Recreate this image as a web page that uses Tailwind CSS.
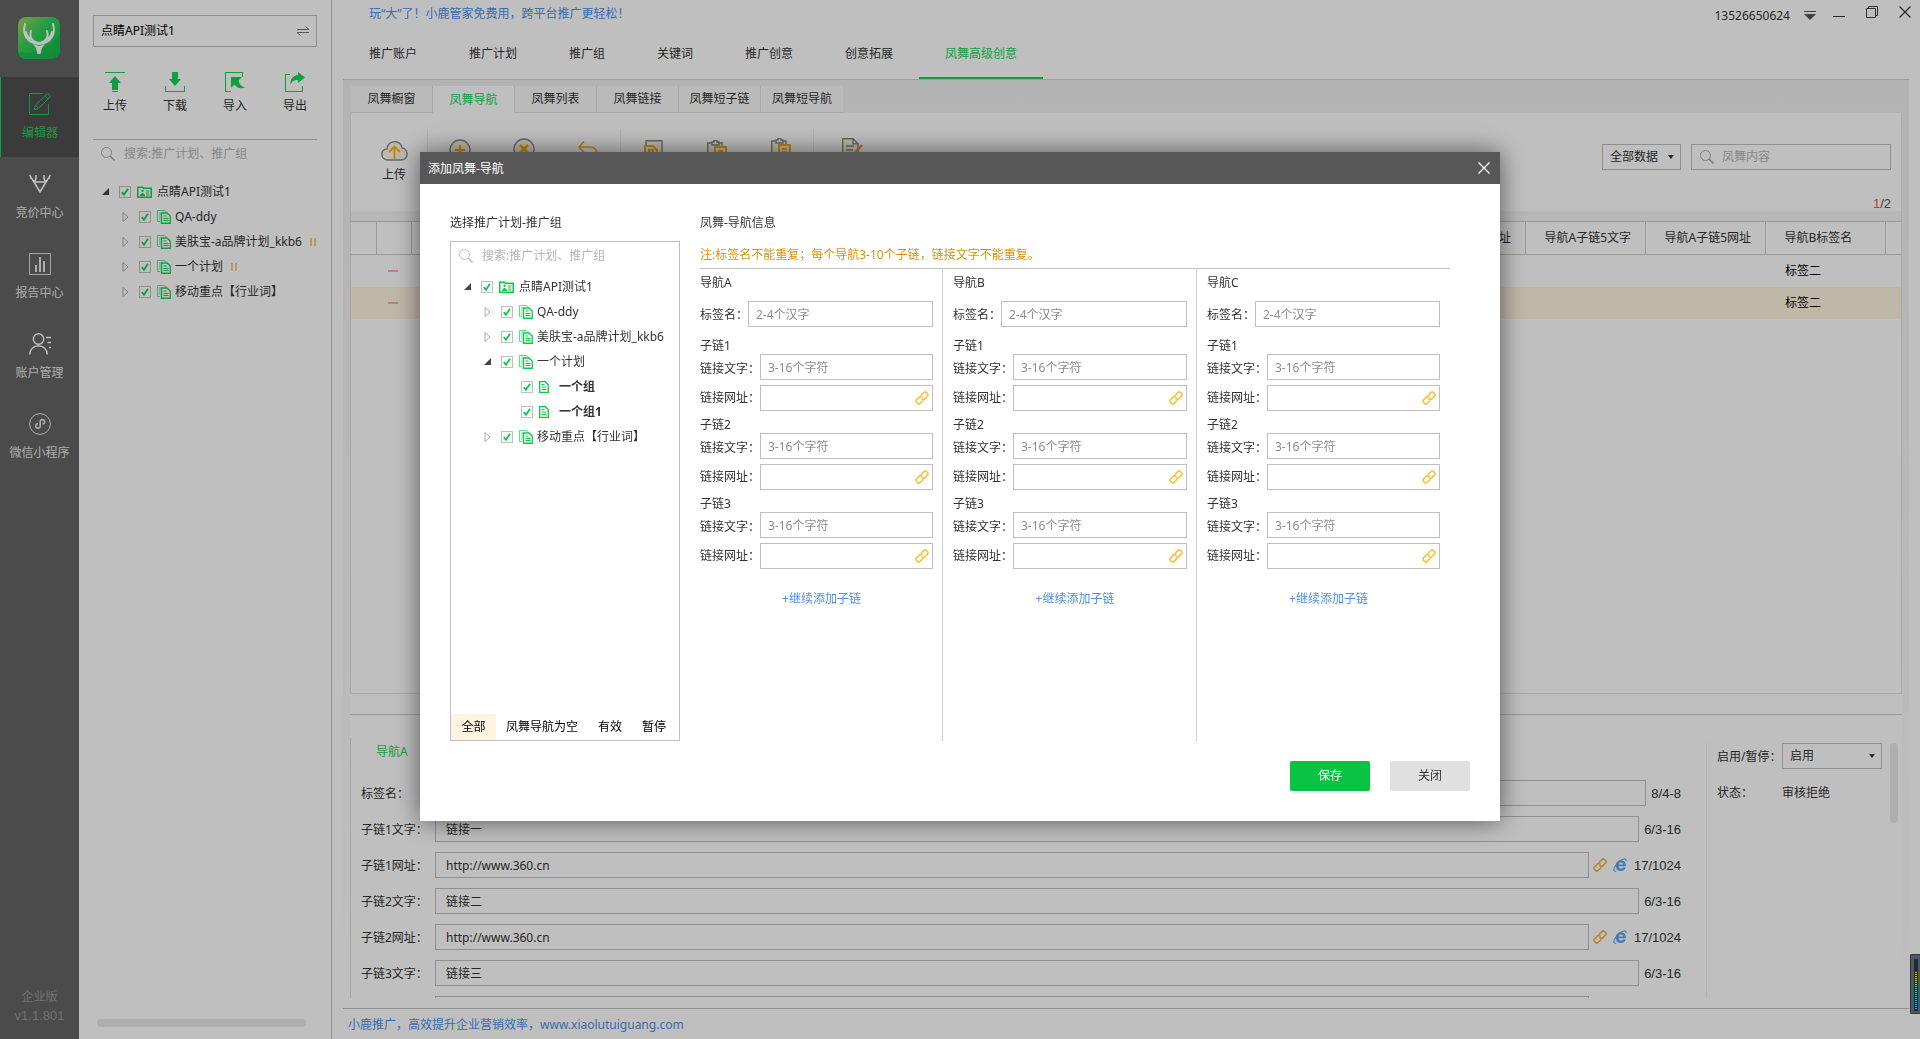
<!DOCTYPE html>
<html lang="zh-CN">
<head>
<meta charset="utf-8">
<title>小鹿推广</title>
<script src="https://cdn.jsdelivr.net/npm/@tailwindcss/browser@4"></script>
</head>
<body class="font-['Noto_Sans','Noto_Sans_CJK_SC',sans-serif] text-xs leading-4 text-[#333] bg-white">

<svg class="hidden" aria-hidden="true">
  <symbol id="search" viewBox="0 0 14 14"><circle cx="5.5" cy="5.5" r="5" fill="none" stroke="currentColor"/><path d="M9 9l4.500 4.500" fill="none" stroke="currentColor" stroke-width="1.600"/></symbol>
  <symbol id="account" viewBox="0 0 15 12"><path d="M.75 1.250h5l1 1h7.500v9H.75z" fill="none" stroke="currentColor" stroke-width="1.500"/><path d="M5.500 3.500v2.500M4.250 4.750h2.500M3 9.500h5M3.500 8.500h4M4.500 7.500h2M9 5h3.500M9 7h3M9 9h3.500" stroke="currentColor" fill="none" stroke-width="1.200"/></symbol>
  <symbol id="plan" viewBox="0 0 14 14"><path d="M3 11.500H.5V.5h7l2 1.500M2 3h2M2 5h1.500M2 7h1.500M2 9h1.500" fill="none" stroke="currentColor" opacity=".65"/><path d="M4.500 3h5.500l3.250 3v7.250H4.500z" fill="none" stroke="currentColor" stroke-width="1.300"/><path d="M6.500 6h3M6.500 8.500h5M6.500 10.500h5" stroke="currentColor" fill="none"/></symbol>
  <symbol id="group" viewBox="0 0 10 12"><path d="M.7.700h5.600l3 3v7.600H.7z" fill="none" stroke="currentColor" stroke-width="1.300"/><path d="M2.500 3.500h3M2.500 6h5M2.500 8.500h5" stroke="currentColor" fill="none"/></symbol>
  <symbol id="tick" viewBox="0 0 12 12"><path d="M2.800 6.200l2.200 2.600 4-6" fill="none" stroke="currentColor" stroke-width="1.800"/></symbol>
  <symbol id="link" viewBox="0 0 14 14"><g fill="none" stroke="currentColor" stroke-width="1.600" transform="rotate(-45 7 7)"><path d="M6 9.500H1.500a1.500 1.500 0 0 1-1.500-1.500V6a1.500 1.500 0 0 1 1.500-1.500h4.500a1.500 1.500 0 0 1 1.500 1.500v1"/><path d="M8 4.500h4.500a1.500 1.500 0 0 1 1.500 1.500v2a1.500 1.500 0 0 1-1.500 1.500H8a1.500 1.500 0 0 1-1.500-1.500V7"/></g></symbol>
  <symbol id="ie" viewBox="0 0 14 14"><path d="M12.900 8.300H5.700c.1 1.500 1 2.300 2.200 2.300.9 0 1.600-.4 1.900-1.100h2.900C12 11.800 10.300 13 7.900 13 4.800 13 2.900 11 2.900 7.700S5 2.300 7.900 2.300c3.200 0 5.100 2.100 5 6zM5.800 6.500h4.300c-.1-1.300-.9-2-2.100-2s-2 .7-2.200 2z" fill="currentColor" fill-rule="evenodd"/><path d="M3.500 13C1 14 .2 12.500 1.200 10 2.700 6 7 1.800 10.500 1c2-.5 2.900.3 2.300 2" fill="none" stroke="currentColor" stroke-width="1.100"/></symbol>
  <symbol id="open" viewBox="0 0 7 7"><path d="M7 0v7H0z" fill="#444"/></symbol>
  <symbol id="closed" viewBox="0 0 7 12"><path d="M1 1.500v9L6 6z" fill="none" stroke="#aaa"/></symbol>
  <symbol id="pause" viewBox="0 0 6 8"><path d="M1 0v8M5 0v8" stroke="#f3bd63" stroke-width="1.500"/></symbol>
  <symbol id="close" viewBox="0 0 12 12"><path d="M.5.500l11 11M11.500.500l-11 11" fill="none" stroke="currentColor" stroke-width="1.200"/></symbol>
</svg>

<div class="flex h-screen overflow-hidden">

  <!-- primary navigation -->
  <nav class="flex w-[79px] shrink-0 flex-col bg-[#646464] text-[#e4e4e4]">
    <div class="flex h-[77px] items-start pt-[17px] pl-[18px]">
      <svg class="size-[42px]" viewBox="0 0 42 42">
        <defs><linearGradient id="lg" x1="0" y1="0" x2="1" y2="1"><stop offset="0" stop-color="#a3d658"/><stop offset=".45" stop-color="#2fd05a"/><stop offset="1" stop-color="#12bd4c"/></linearGradient></defs>
        <rect width="42" height="42" rx="8" fill="url(#lg)"/>
        <path d="M0 35c12 3 30-2 42-18v17a8 8 0 0 1-8 8H8a8 8 0 0 1-8-7z" fill="#10b848" opacity=".5"/>
        <path d="M7 7c-3 10 2 19 14 20 12-1 17-10 14-20M13 14c-2 6 1 11 8 12 7-1 10-6 8-12M8 15c0 3 2 5 4 7M34 15c0 3-2 5-4 7" fill="none" stroke="#fff" stroke-width="2" stroke-linecap="round"/>
        <path d="M15 27l6 2 6-2-3 4-1.500 6h-3L18 31z" fill="#fff"/>
      </svg>
    </div>
    <a href="#" class="flex h-20 flex-col items-center border-l border-[#12d654] bg-[#4f4f4f] pt-4 text-[#1fca5a]">
      <svg class="size-[22px]" viewBox="0 0 22 22" fill="none" stroke="currentColor"><path d="M13.500.5H.5v21h19V11"/><path d="M5 17l1.500-5L17.500 1.200q1.200-.9 2.500.3t.8 2.500L9.500 15.500zM6.500 12l3 3.500M16 3l3 3"/></svg>
      <span class="mt-[10px]">编辑器</span>
    </a>
    <a href="#" class="flex h-20 flex-col items-center pt-4">
      <svg class="size-[22px]" viewBox="0 0 22 22" fill="none" stroke="#fff" stroke-width="1.500"><path d="M.5 2l4.500 7 6 10 6-10 4.500-7M5 9h12M7 2v4L5 9M15 2v4l2 3M3.500 6L1 4.500M18.500 6L21 4.500"/></svg>
      <span class="mt-[10px]">竞价中心</span>
    </a>
    <a href="#" class="flex h-20 flex-col items-center pt-4">
      <svg class="size-[22px]" viewBox="0 0 22 22" fill="none" stroke="#fff"><rect x=".5" y=".5" width="21" height="21" opacity=".75"/><path d="M7 12v7M11 4v15M15 8v11" stroke-width="1.700"/></svg>
      <span class="mt-[10px]">报告中心</span>
    </a>
    <a href="#" class="flex h-20 flex-col items-center pt-4">
      <svg class="size-[22px]" viewBox="0 0 22 22" fill="none" stroke="#fff" stroke-width="1.400"><circle cx="9.500" cy="6" r="5.200"/><path d="M.7 21.500a8.500 8.500 0 0 1 17.600 0M17 4.500h5M18.500 9.500H22M20 14.500h2"/></svg>
      <span class="mt-[10px]">账户管理</span>
    </a>
    <a href="#" class="flex h-20 flex-col items-center pt-4">
      <svg class="size-[22px]" viewBox="0 0 22 22" fill="none" stroke="#e4e4e4"><circle cx="11" cy="11" r="10.400"/><path d="M9 10.800c-3 0-3 4.500 0 4.500 1.500 0 2.200-1 2.200-2.200V8.800c0-1.300.8-2.200 2.200-2.200 3 0 3 4.400 0 4.400" stroke-width="1.600"/></svg>
      <span class="mt-[10px]">微信小程序</span>
    </a>
    <div class="mt-auto pb-[14px] text-center text-[#979797]">
      <p class="leading-[19px]">企业版</p>
      <p class="font-['Liberation_Sans',sans-serif] text-[13px] leading-[19px]">v1.1.801</p>
    </div>
  </nav>

  <!-- account tree -->
  <aside class="flex w-[253px] shrink-0 flex-col border-r border-[#bfbfbf] px-[14px]">
    <button class="mt-[15px] flex h-8 items-center justify-between border border-[#bfbfbf] px-[7px] text-left text-black">
      <span>点睛API测试1</span>
      <svg class="h-[10px] w-3" viewBox="0 0 12 10" fill="none" stroke="#777"><path d="M0 3.500h12L8.500.5M12 6.500H0L3.500 9.500"/></svg>
    </button>
    <div class="flex justify-between px-[7px] pt-[25px] text-center">
      <button class="flex w-[30px] flex-col items-center"><svg class="size-5" viewBox="0 0 20 20" fill="#12d654"><path d="M0 0h20v1H0zM10 4l6 7h-3v7H7v-7H4zM7 19h6v1H7z"/></svg><span class="mt-[6px]">上传</span></button>
      <button class="flex w-[30px] flex-col items-center"><svg class="size-5" viewBox="0 0 20 20" fill="#12d654"><path d="M7 0h6v7h3l-6 7-6-7h3zM0 14h1v5h18v-5h1v6H0z"/></svg><span class="mt-[6px]">下载</span></button>
      <button class="flex w-[30px] flex-col items-center"><svg class="size-5" viewBox="0 0 20 20" fill="#12d654"><path d="M0 0h18v5h-1V1H1v18h5v1H0z"/><path d="M6 5h11l-3.500 3.500c1 4 3 6 6.500 7-5 2-8.500 0-10.500-3L6 16z"/></svg><span class="mt-[6px]">导入</span></button>
      <button class="flex w-[30px] flex-col items-center"><svg class="size-5" viewBox="0 0 20 20" fill="#12d654"><path d="M0 2h5v1H1v16h16v-5h1v6H0z"/><path d="M13 0l7 5.500-7 5.500V8c-4 0-6 1-7.500 5C5 7 8 3.500 13 3z"/></svg><span class="mt-[6px]">导出</span></button>
    </div>
    <label class="mt-[25px] flex h-7 items-center gap-[9px] border-t border-[#bfbfbf] pl-2 text-[#aaa]">
      <svg class="size-[14px]"><use href="#search"/></svg>
      <input class="min-w-0 flex-1 outline-none placeholder:text-[#b4b4b4]" placeholder="搜索:推广计划、推广组">
    </label>
    <ul class="mt-3 overflow-hidden whitespace-nowrap pl-[9px] text-[#12d654]" id="side-tree"></ul>
    <div class="mt-auto mr-[11px] mb-3 ml-1 h-2 rounded-full bg-[#eaeaea]"></div>
  </aside>

  <!-- workspace -->
  <div class="flex min-w-0 flex-1 flex-col pl-[11px]">
    <header class="flex h-[29px] shrink-0 justify-between pr-[9px]">
      <a href="#" class="mt-[6px] ml-[26px] text-[#4a90ee]">玩“大”了！小鹿管家免费用，跨平台推广更轻松！</a>
      <div class="flex items-start">
        <span class="mt-[8px] mr-[14px]">13526650624</span>
        <button class="mt-[11px] mr-[17px]" aria-label="菜单"><svg class="h-[9px] w-3" viewBox="0 0 12 9" fill="#555"><path d="M0 0h12v1H0zM0 3h12L6 9z"/></svg></button>
        <button class="mt-[6px] mr-[21px]" aria-label="最小化"><svg class="size-3" viewBox="0 0 12 12"><path d="M0 10.500h12" stroke="#333"/></svg></button>
        <button class="mt-[6px] mr-[21px]" aria-label="还原"><svg class="size-3" viewBox="0 0 12 12" fill="none" stroke="#444"><path d="M.5 2.500h9v9h-9zM2.500 2.500v-2h9v9h-2"/></svg></button>
        <button class="mt-[6px]" aria-label="关闭窗口"><svg class="size-3"><use href="#close"/></svg></button>
      </div>
    </header>
    <nav class="mr-[11px] flex h-[51px] shrink-0 border-b border-[#d0d0d0] leading-[50px]">
      <a href="#" class="px-[26px]">推广账户</a><a href="#" class="px-[26px]">推广计划</a><a href="#" class="px-[26px]">推广组</a><a href="#" class="px-[26px]">关键词</a><a href="#" class="px-[26px]">推广创意</a><a href="#" class="px-[26px]">创意拓展</a><a href="#" class="border-b-2 border-[#12d654] px-[26px] text-[#12d654]">凤舞高级创意</a>
    </nav>

    <div class="mr-[11px] flex min-h-0 flex-1 flex-col bg-linear-to-b from-[#efefef] to-white px-[7px]">
      <nav class="flex h-[33px] shrink-0 pt-[6px] pl-px text-center leading-[26px]">
        <a href="#" class="w-[82px] border-r border-b border-[#e2e2e2] bg-[#f9f9f9]">凤舞橱窗</a><a href="#" class="w-[82px] border-r border-[#e2e2e2] bg-white pt-px text-[#12d654]">凤舞导航</a><a href="#" class="w-[82px] border-r border-b border-[#e2e2e2] bg-[#f9f9f9]">凤舞列表</a><a href="#" class="w-[82px] border-r border-b border-[#e2e2e2] bg-[#f9f9f9]">凤舞链接</a><a href="#" class="w-[82px] border-r border-b border-[#e2e2e2] bg-[#f9f9f9]">凤舞短子链</a><a href="#" class="w-[82px] border-b border-[#e2e2e2] bg-[#f9f9f9]">凤舞短导航</a>
      </nav>

      <section class="flex min-h-0 flex-1 flex-col border border-t-0 border-[#e2e2e2] bg-white">
        <div class="flex h-[98px] shrink-0 justify-between px-[10px]">
          <div class="mt-4 flex h-[60px]">
            <button class="flex w-[66px] flex-col items-center pt-3"><svg class="h-5 w-[27px]" viewBox="0 0 27 20" fill="#fff6df" stroke="#888b90" stroke-width="1.400"><path d="M7 19C-1 19-1 8 6 8c0-9 14-10 15-1 7 1 7 12-1 12z"/><path d="M13.500 18V6M8 11l5.500-5.500L19 11" fill="none" stroke="#f8b313" stroke-width="1.800"/></svg><span class="mt-[6px]">上传</span></button>
            <span class="w-px bg-[#ececec]"></span>
            <button class="flex w-16 justify-center pt-[10px]" aria-label="添加"><svg class="size-[22px]" viewBox="0 0 22 22" fill="#fff6df" stroke="#888b90" stroke-width="1.400"><circle cx="11" cy="11" r="10"/><path d="M11 6v10M6 11h10" stroke="#f8b313" stroke-width="2.200"/></svg></button>
            <button class="flex w-16 justify-center pt-[9px]" aria-label="删除"><svg class="size-[22px]" viewBox="0 0 22 22" fill="#fff6df" stroke="#888b90" stroke-width="1.400"><circle cx="11" cy="11" r="10"/><path d="M7 7l8 8M15 7l-8 8" stroke="#f8b313" stroke-width="2.600"/></svg></button>
            <button class="flex w-16 justify-center pt-3" aria-label="还原修改"><svg class="size-5" viewBox="0 0 20 20" fill="none" stroke="#f8b313" stroke-width="1.600"><path d="M6 .5L1 6l5 5.500M1 6h11q7 0 7 8"/></svg></button>
            <span class="w-px bg-[#ececec]"></span>
            <button class="flex w-16 justify-center pt-[11px]" aria-label="复制"><svg class="size-5" viewBox="0 0 20 20" fill="#fff6df" stroke="#888b90" stroke-width="1.400"><path d="M3 5V.7h16V19h-6"/><path d="M2 6h8l4 4v9H2zM6 14v-4h4v4" stroke="#f8b313" stroke-width="2"/></svg></button>
            <button class="flex w-16 justify-center pt-[11px]" aria-label="粘贴"><svg class="size-5" viewBox="0 0 20 20" fill="#fff6df" stroke="#888b90" stroke-width="1.400"><path d="M5 3H.7v16H8M11 3h4v3M5 2h2V.5h3V2h2v3H5z"/><path d="M8 7h11v12H8zM11 11h5M11 14h5" stroke="#f8b313" stroke-width="2"/></svg></button>
            <button class="flex w-16 justify-center pt-[9px]" aria-label="高级粘贴"><svg class="size-5" viewBox="0 0 20 20" fill="#fff6df" stroke="#888b90" stroke-width="1.400"><path d="M5 3H.7v16H8M11 3h4v3M5 2h2V.5h3V2h2v3H5z"/><path d="M8 7h11v12H8zM11 11h5M11 14h5" stroke="#f8b313" stroke-width="2"/></svg></button>
            <span class="w-px bg-[#ececec]"></span>
            <button class="flex w-[76px] justify-center pt-[9px]" aria-label="批量编辑"><svg class="h-5 w-[21px]" viewBox="0 0 21 20" fill="#fff6df" stroke="#888b90" stroke-width="1.400"><path d="M.7.700H11l5 5V19H.7zM11 .7v5h5M4 8h8M4 12h7"/><path d="M20 7L12 16" stroke="#eda23a" stroke-width="2.600"/></svg></button>
          </div>
          <div class="flex flex-col items-end pt-[31px]">
            <div class="flex gap-[10px]">
              <span class="relative"><select aria-label="数据范围" class="h-[26px] w-[79px] appearance-none border border-[#bfbfbf] pl-[7px] outline-none"><option>全部数据</option></select><svg class="pointer-events-none absolute top-[11px] right-[7px] h-1 w-[6px]" viewBox="0 0 6 4"><path d="M0 0h6L3 4z" fill="#333"/></svg></span>
              <label class="flex h-[26px] w-[200px] items-center gap-2 border border-[#bfbfbf] px-2 text-[#aaa]"><svg class="size-[14px]"><use href="#search"/></svg><input class="min-w-0 flex-1 outline-none placeholder:text-[#b4b4b4]" placeholder="凤舞内容"></label>
            </div>
            <p class="mt-[26px] font-['Liberation_Sans',sans-serif] text-[13px] leading-4 text-[#555]"><span class="text-[#f05a44]">1</span>/2</p>
          </div>
        </div>
        <div class="h-[10px] shrink-0 bg-[#f5f5f5]"></div>
        <table class="w-full table-fixed border-collapse text-left">
          <colgroup><col class="w-[25px]"><col class="w-[35px]"><col><col class="w-[120px]"><col class="w-[120px]"><col class="w-[120px]"><col class="w-[120px]"><col class="w-4"></colgroup>
          <thead><tr class="h-[33px] border-y border-[#cdcdcd]">
            <th class="border-r border-[#cdcdcd]"></th><th class="border-r border-[#cdcdcd]"></th><th class="border-r border-[#cdcdcd] pl-2"><div class="h-[14px] w-3 border border-[#888]"></div></th>
            <th class="border-r border-[#cdcdcd] pl-[19px] font-normal">导航A子链4网址</th><th class="border-r border-[#cdcdcd] pl-[19px] font-normal">导航A子链5文字</th><th class="border-r border-[#cdcdcd] pl-[19px] font-normal">导航A子链5网址</th><th class="border-r border-[#cdcdcd] pl-[19px] font-normal">导航B标签名</th><th></th>
          </tr></thead>
          <tbody class="text-black">
            <tr class="h-8"><td></td><td><div class="ml-3 h-[2px] w-[10px] bg-[#ffaaaa]"></div></td><td></td><td></td><td></td><td></td><td class="pl-5">标签二</td><td></td></tr>
            <tr class="h-8 bg-[#fff5e0]"><td></td><td><div class="ml-3 h-[2px] w-[10px] bg-[#ffaaaa]"></div></td><td></td><td></td><td></td><td></td><td class="pl-5">标签二</td><td></td></tr>
          </tbody>
        </table>
      </section>

      <div class="h-[20px] shrink-0 bg-white"></div>
      <section class="flex h-[294px] shrink-0 border-t border-[#cfcfcf] bg-white pt-[23px] pb-[10px]">
        <div class="flex min-w-0 flex-1 flex-col overflow-hidden border-l border-[#dcdcdc] pr-[25px] pl-[10px]">
          <h2 class="mb-5 shrink-0 pt-[6px] pl-[15px] text-[#12d654]">导航A</h2>
          <div id="detail-rows" class="flex flex-col gap-[10px]"></div>
        </div>
        <div class="mt-[5px] flex w-[196px] border-l border-[#efefef] pr-1 pl-[10px]">
          <div class="flex-1">
            <div class="flex items-center"><label for="state" class="w-[65px] pt-px">启用/暂停：</label>
              <span class="relative"><select id="state" class="h-[26px] w-[100px] appearance-none border border-[#bfbfbf] pl-[7px] outline-none"><option>启用</option></select><svg class="pointer-events-none absolute top-[11px] right-[7px] h-1 w-[6px]" viewBox="0 0 6 4"><path d="M0 0h6L3 4z" fill="#333"/></svg></span></div>
            <div class="mt-4 flex"><span class="w-[65px]">状态：</span><span>审核拒绝</span></div>
          </div>
          <div class="h-20 w-2 rounded-full bg-[#eaeaea]"></div>
        </div>
      </section>
    </div>
    <footer class="mr-[11px] h-[31px] shrink-0 border-t border-[#bfbfbf] pt-2 pl-[5px] text-[#4a90ee]">小鹿推广，高效提升企业营销效率，<a href="#">www.xiaolutuiguang.com</a></footer>
  </div>
</div>

<!-- dialog -->
<div class="fixed inset-0 flex items-start justify-center bg-black/25 pt-[152px]">
  <div role="dialog" aria-labelledby="dlg-title" class="w-[1080px] bg-white shadow-[0_0_24px_rgba(0,0,0,0.55)]">
    <header class="flex h-8 items-center justify-between bg-[#575757] pr-[10px] pl-2 text-white">
      <h1 id="dlg-title" class="pt-px">添加凤舞-导航</h1>
      <button aria-label="关闭对话框"><svg class="size-3"><use href="#close"/></svg></button>
    </header>
    <div class="flex gap-5 px-[30px] pt-[31px]">
      <section class="w-[230px]">
        <h2>选择推广计划-推广组</h2>
        <div class="mt-[10px] flex h-[500px] flex-col border border-[#bfbfbf]">
          <label class="flex h-7 items-center gap-[9px] pl-2 text-[#bbb]">
            <svg class="size-[14px]"><use href="#search"/></svg>
            <input class="min-w-0 flex-1 outline-none placeholder:text-[#b4b4b4]" placeholder="搜索:推广计划、推广组">
          </label>
          <ul class="mt-1 whitespace-nowrap pl-[13px] text-[#04cb46]" id="dialog-tree"></ul>
          <div class="mt-auto flex h-[26px] text-black">
            <button class="w-[45px] bg-[#fff4e0]">全部</button><button class="px-[10px]">凤舞导航为空</button><button class="px-[10px]">有效</button><button class="px-[10px]">暂停</button>
          </div>
        </div>
      </section>
      <section class="w-[750px]">
        <h2>凤舞-导航信息</h2>
        <p class="mt-4 text-[#dd9108]">注:标签名不能重复；每个导航3-10个子链，链接文字不能重复。</p>
        <div class="mt-[5px] grid h-[473px] grid-cols-[243px_254px_253px] border-t border-[#bfbfbf]" id="nav-cols"></div>
      </section>
    </div>
    <footer class="flex justify-end gap-5 pt-5 pr-[30px] pb-[30px]">
      <button class="h-[30px] w-20 rounded-[2px] bg-[#09c342] text-white">保存</button>
      <button class="h-[30px] w-20 rounded-[2px] bg-[#e0e0e0]">关闭</button>
    </footer>
  </div>
</div>

<!-- floating level meter -->
<div class="fixed right-0 bottom-[25px] flex h-[60px] w-[10px] justify-center rounded-l-[2px] border border-r-0 border-[#30353c] bg-[#4d5962] py-1">
  <svg class="h-[52px] w-1" viewBox="0 0 4 52"><defs><linearGradient id="meter" x1="0" y1="0" x2="0" y2="1"><stop offset="0" stop-color="#f3b600"/><stop offset=".2" stop-color="#d8d540"/><stop offset=".45" stop-color="#52cfae"/><stop offset=".7" stop-color="#1fb0f0"/><stop offset="1" stop-color="#1fb0f0"/></linearGradient></defs><rect width="4" height="52" fill="#23272e"/><rect x="1" y="13" width="2" height="38" fill="url(#meter)"/><path d="M2 14v38" stroke="#23272e" stroke-width="4" stroke-dasharray="1 1"/></svg>
</div>

<script>
  // Tree rows: [level, expander, icon, text, paused]
  const pads = ['', 'pl-5', 'pl-[57px]'];
  function treeRow([level, expander, icon, text, paused], id) {
    const arrow = expander === 'open'
      ? '<svg class="mr-[10px] size-[7px]"><use href="#open"/></svg>'
      : expander === 'closed' ? '<svg class="mr-[10px] h-3 w-[7px]"><use href="#closed"/></svg>' : '';
    const icons = {
      account: '<svg class="ml-[6px] mr-[5px] h-3 w-[15px] shrink-0"><use href="#account"/></svg>',
      plan: '<svg class="ml-[6px] mr-1 size-[14px] shrink-0"><use href="#plan"/></svg>',
      group: '<svg class="ml-[6px] mr-[10px] h-3 w-[10px] shrink-0"><use href="#group"/></svg>',
    };
    return `<li class="flex h-[25px] items-center ${pads[level]}">${arrow}
      <span class="relative size-3 shrink-0"><input type="checkbox" checked id="${id}" class="absolute inset-0 size-3 appearance-none border border-[#bfbfbf]"><svg class="pointer-events-none absolute inset-0 size-3"><use href="#tick"/></svg></span>
      ${icons[icon]}<label for="${id}" class="${icon === 'group' ? 'font-bold text-[#333]' : 'text-[#333]'}">${text}</label>
      ${paused ? '<svg class="ml-2 h-2 w-[6px] shrink-0"><use href="#pause"/></svg>' : ''}</li>`;
  }
  document.getElementById('side-tree').innerHTML = [
    [0, 'open', 'account', '点睛API测试1'],
    [1, 'closed', 'plan', 'QA-ddy'],
    [1, 'closed', 'plan', '美肤宝-a品牌计划_kkb6', true],
    [1, 'closed', 'plan', '一个计划', true],
    [1, 'closed', 'plan', '移动重点【行业词】'],
  ].map((r, i) => treeRow(r, 'side' + i)).join('');
  document.getElementById('dialog-tree').innerHTML = [
    [0, 'open', 'account', '点睛API测试1'],
    [1, 'closed', 'plan', 'QA-ddy'],
    [1, 'closed', 'plan', '美肤宝-a品牌计划_kkb6'],
    [1, 'open', 'plan', '一个计划'],
    [2, '', 'group', '一个组'],
    [2, '', 'group', '一个组1'],
    [1, 'closed', 'plan', '移动重点【行业词】'],
  ].map((r, i) => treeRow(r, 'dlg' + i)).join('');

  const colClass = ['border-r border-[#cfcfcf] pr-[9px]', 'border-r border-[#cfcfcf] pr-[9px] pl-[10px]', 'pr-[10px] pl-[10px]'];
  document.getElementById('nav-cols').innerHTML = ['A', 'B', 'C'].map((n, c) => `
    <div class="${colClass[c]}">
      <h3 class="pt-[6px]">导航${n}</h3>
      <div class="mt-[10px] mb-[11px] flex items-center"><label for="tag${n}" class="w-12 whitespace-nowrap pt-px">标签名：</label><input id="tag${n}" placeholder="2-4个汉字" class="h-[26px] min-w-0 flex-1 border border-[#bfbfbf] px-[7px] outline-none placeholder:text-[#8c8c8c]"></div>
      ${[1, 2, 3].map(k => `
      <div class="mb-[6px]">
        <h4>子链${k}</h4>
        <div class="mb-[5px] flex items-center"><label for="txt${n}${k}" class="w-[60px] whitespace-nowrap pt-1">链接文字：</label><input id="txt${n}${k}" placeholder="3-16个字符" class="h-[26px] min-w-0 flex-1 border border-[#bfbfbf] px-[7px] outline-none placeholder:text-[#8c8c8c]"></div>
        <div class="flex items-center"><label for="url${n}${k}" class="w-[60px] whitespace-nowrap">链接网址：</label><span class="relative flex min-w-0 flex-1"><input id="url${n}${k}" class="h-[26px] min-w-0 flex-1 border border-[#bfbfbf] pr-6 pl-[7px] outline-none"><svg class="absolute top-[6px] right-1 size-[14px] text-[#fbc23f]"><use href="#link"/></svg></span></div>
      </div>`).join('')}
      <p class="mt-[22px] pl-[10px] text-center"><a href="#" class="text-[#4a90ee]">+继续添加子链</a></p>
    </div>`).join('');

  document.getElementById('detail-rows').innerHTML = [
    ['标签名：', '标签一', '8/4-8'],
    ['子链1文字：', '链接一', '6/3-16'],
    ['子链1网址：', 'http://www.360.cn', '17/1024'],
    ['子链2文字：', '链接二', '6/3-16'],
    ['子链2网址：', 'http://www.360.cn', '17/1024'],
    ['子链3文字：', '链接三', '6/3-16'],
  ].map(([l, v, c], i) => `
    <div class="flex h-[26px] shrink-0 items-center"><label for="row${i}" class="w-[74px] shrink-0 whitespace-nowrap pt-px">${l}</label>
      <input id="row${i}" value="${v}" class="h-[26px] min-w-0 flex-1 border border-[#bfbfbf] px-[10px] outline-none">
      ${v[0] === 'h' ? '<svg class="ml-1 size-[14px] text-[#f0b840]"><use href="#link"/></svg><svg class="ml-[6px] mr-[2px] size-[14px] text-[#5ea9ee]"><use href="#ie"/></svg>' : ''}
      <span class="ml-[5px] pt-px font-['Liberation_Sans',sans-serif] text-[13px]">${c}</span></div>`).join('')
    + '<div class="flex h-[26px] shrink-0 pr-[92px] pl-[74px]"><input aria-label="子链3网址" class="min-w-0 flex-1 border border-[#bfbfbf] outline-none"></div>';
</script>
</body>
</html>
